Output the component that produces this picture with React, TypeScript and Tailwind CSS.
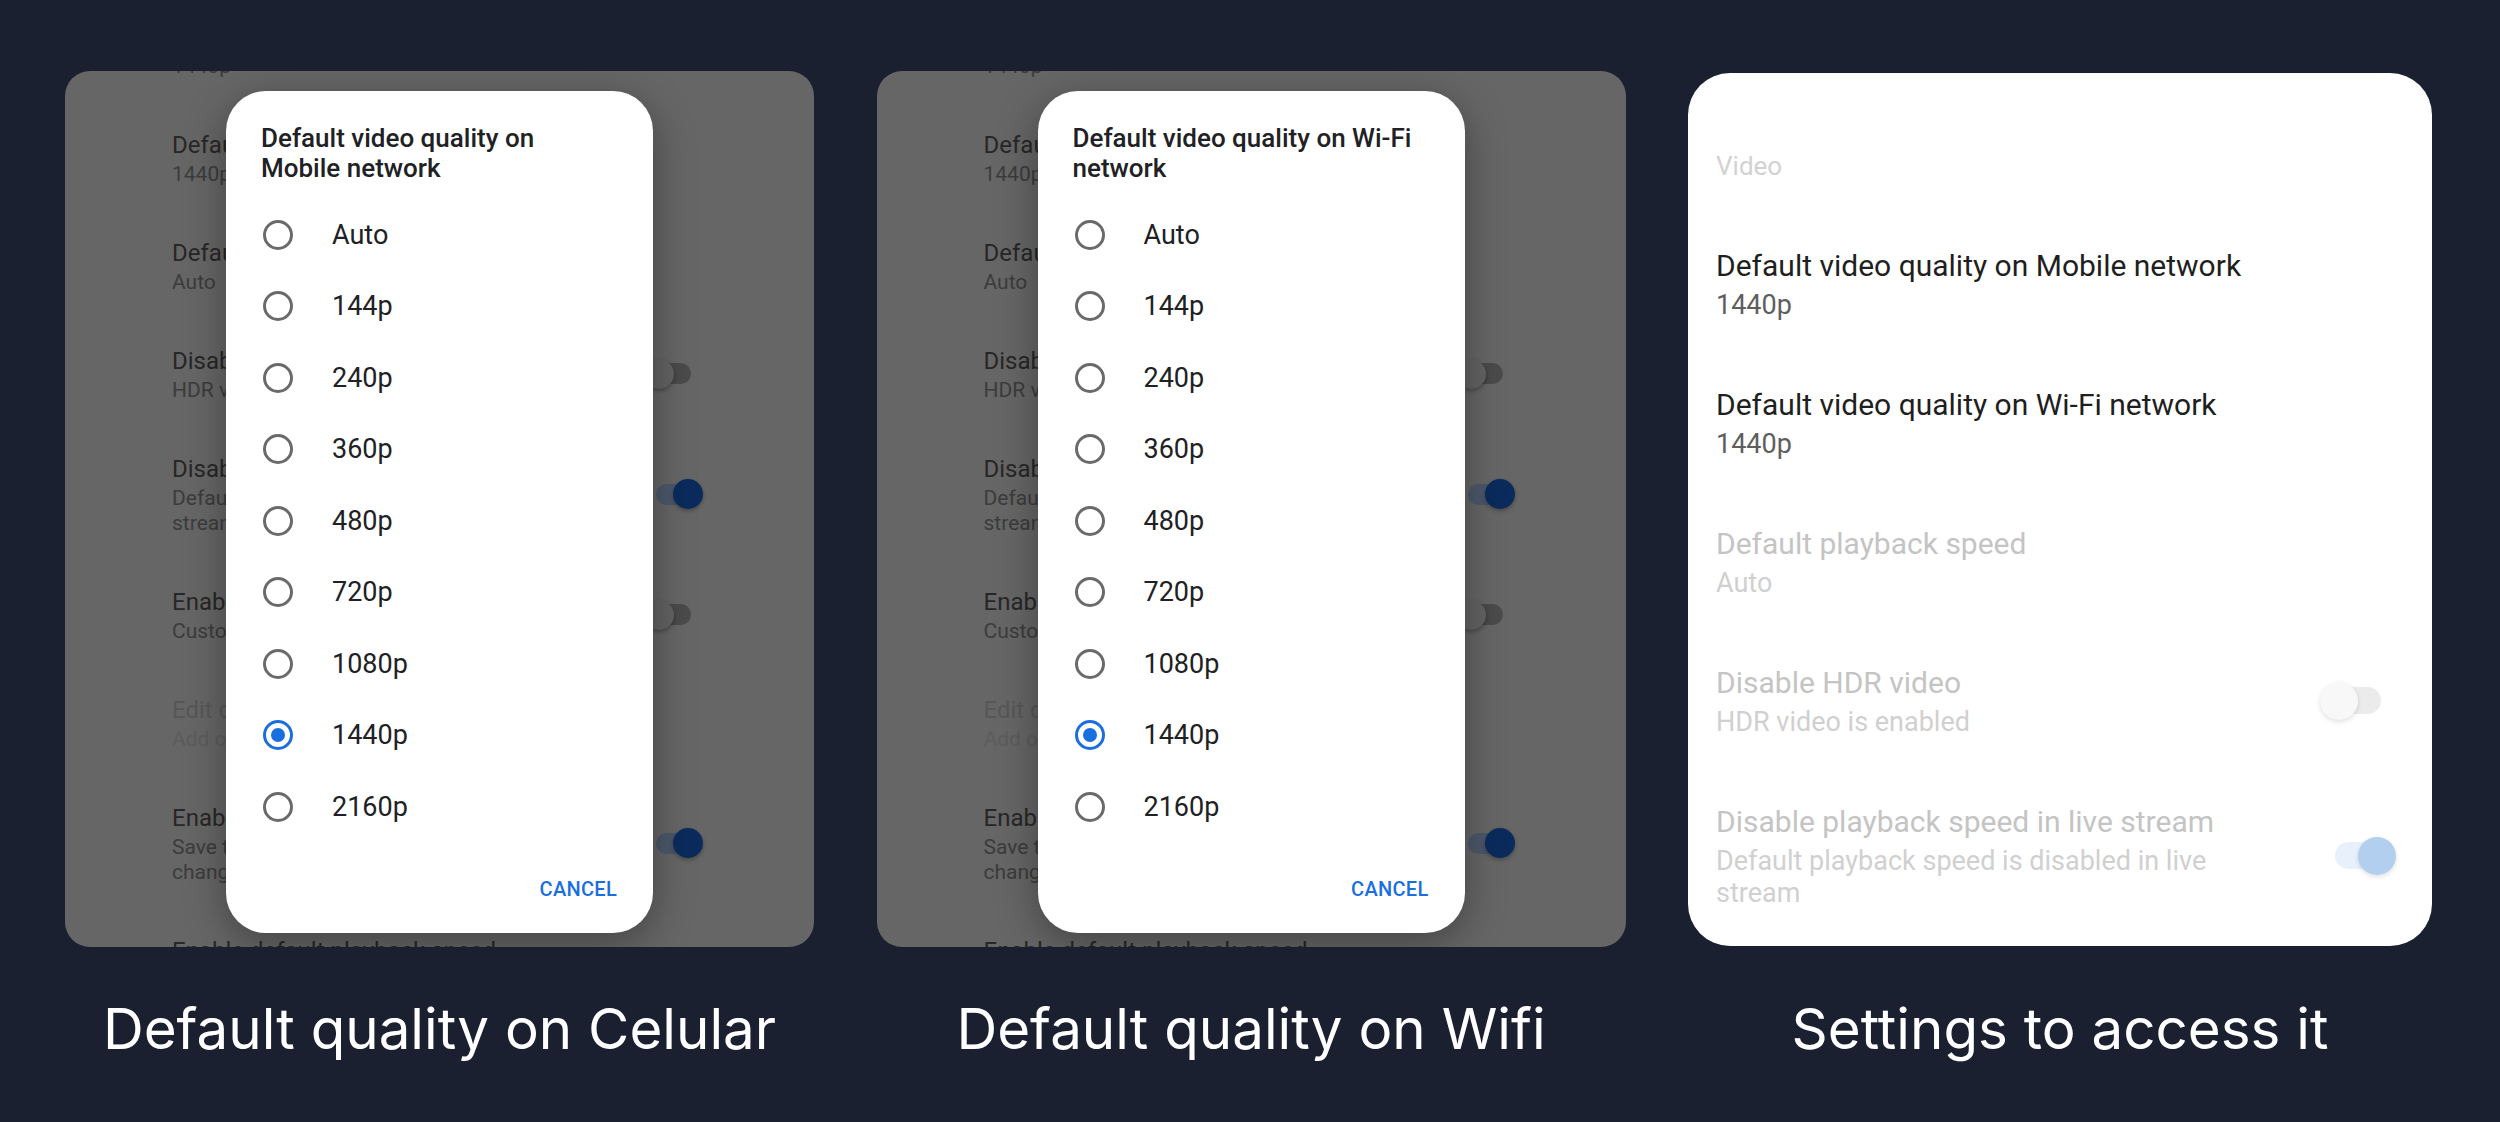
import React from "react";

type Row = {
  title: string;
  sub: string[];
  toggle?: "on" | "off";
  disabled?: boolean;
};

const qualities = ["Auto", "144p", "240p", "360p", "480p", "720p", "1080p", "1440p", "2160p"];

// settings list that sits dimmed behind the dialogs
const dimRows: Row[] = [
  { title: "Default video quality on Mobile network", sub: ["1440p"] },
  { title: "Default video quality on Wi-Fi network", sub: ["1440p"] },
  { title: "Default playback speed", sub: ["Auto"] },
  { title: "Disable HDR video", sub: ["HDR video is enabled"], toggle: "off" },
  {
    title: "Disable playback speed in live stream",
    sub: ["Default playback speed is disabled in live", "stream"],
    toggle: "on",
  },
  { title: "Enable custom playback speed", sub: ["Custom playback speed is disabled"], toggle: "off" },
  { title: "Edit custom playback speeds", sub: ["Add or change the available speeds"], disabled: true },
  {
    title: "Enable save playback speed",
    sub: ["Save the playback speed whenever it is", "changed"],
    toggle: "on",
  },
  { title: "Enable default playback speed", sub: ["Default playback speed is enabled"], toggle: "off" },
];

const liveRows: Row[] = [
  { title: "Default video quality on Mobile network", sub: ["1440p"] },
  { title: "Default video quality on Wi-Fi network", sub: ["1440p"] },
  { title: "Default playback speed", sub: ["Auto"], disabled: true },
  { title: "Disable HDR video", sub: ["HDR video is enabled"], toggle: "off", disabled: true },
  {
    title: "Disable playback speed in live stream",
    sub: ["Default playback speed is disabled in live", "stream"],
    toggle: "on",
    disabled: true,
  },
];

function DimToggle({ on }: { on: boolean }) {
  return (
    <div className="relative w-[59px] h-[30px] shrink-0">
      <div
        className={`absolute left-[12px] top-[4.5px] w-[35px] h-[21px] rounded-full ${
          on ? "bg-[#4c586b]" : "bg-[#4b4b4b]"
        }`}
      />
      <div
        className={`absolute top-0 w-[30px] h-[30px] rounded-full shadow-[0_2px_4px_rgba(0,0,0,0.3)] ${
          on ? "right-0 bg-[#0a2b5c]" : "left-0 bg-[#636363]"
        }`}
      />
    </div>
  );
}

function LightToggle({ on }: { on: boolean }) {
  return (
    <div className="relative w-[76px] h-[38px] shrink-0">
      <div
        className={`absolute left-[15px] top-[5.5px] w-[46px] h-[27px] rounded-full ${
          on ? "bg-[#e8f0fb]" : "bg-[#ebebeb]"
        }`}
      />
      <div
        className={`absolute top-0 w-[38px] h-[38px] rounded-full shadow-[0_2px_5px_rgba(0,0,0,0.12)] ${
          on ? "right-0 bg-[#b3cff0]" : "left-0 bg-[#f8f8f8]"
        }`}
      />
    </div>
  );
}

function Radio({ selected }: { selected: boolean }) {
  return (
    <span
      className={`w-[30px] h-[30px] rounded-full border-[3px] flex items-center justify-center shrink-0 ${
        selected ? "border-[#1a6fe0]" : "border-[#6a6a6a]"
      }`}
    >
      {selected && <span className="w-[14px] h-[14px] rounded-full bg-[#1a6fe0]" />}
    </span>
  );
}

function QualityDialog({ title }: { title: string[] }) {
  return (
    <div className="absolute left-[161px] top-[20px] w-[427px] h-[842px] bg-white rounded-[40px] shadow-[0_10px_40px_rgba(0,0,0,0.35)] flex flex-col">
      <div className="pt-[32px] pl-[35px] text-[26px] leading-[30px] font-medium text-[#202124]">
        {title[0]}
        <br />
        {title[1]}
      </div>
      <div className="mt-[16px] flex flex-col">
        {qualities.map((q) => (
          <div key={q} className="h-[71.5px] flex items-center pl-[37px]">
            <Radio selected={q === "1440p"} />
            <span className="ml-[39px] text-[27px] text-[#202124]">{q}</span>
          </div>
        ))}
      </div>
      <div className="mt-auto mb-[29px] pr-[36px] flex justify-end">
        <span className="text-[20px] font-medium text-[#1a6fe0] tracking-[0.3px]">CANCEL</span>
      </div>
    </div>
  );
}

function DimPanel({ title }: { title: string[] }) {
  return (
    <div className="relative w-[749px] h-[876px] rounded-[25px] bg-[#666666] overflow-hidden">
      <div className="mt-[-75px] flex flex-col">
        {dimRows.map((r) => (
          <div key={r.title} className="flex items-center pl-[107px] pr-[111px] pt-[24px] pb-[25px]">
            <div className="flex-1 min-w-0 overflow-hidden whitespace-nowrap">
              <div
                className={`text-[24px] leading-[34px] ${r.disabled ? "text-[#575757]" : "text-[#272727]"}`}
              >
                {r.title}
              </div>
              {r.sub.map((s) => (
                <div
                  key={s}
                  className={`text-[21px] leading-[25px] ${r.disabled ? "text-[#5c5c5c]" : "text-[#3c3c3c]"}`}
                >
                  {s}
                </div>
              ))}
            </div>
            {r.toggle && <DimToggle on={r.toggle === "on"} />}
          </div>
        ))}
      </div>
      <QualityDialog title={title} />
    </div>
  );
}

function SettingsPanel() {
  return (
    <div className="mt-[2px] w-[744px] h-[873px] rounded-[42px] bg-white overflow-hidden flex flex-col">
      <div className="pt-[76px] pl-[28px] text-[26px] leading-[34px] text-[#d2d2d2] mb-[31px]">Video</div>
      {liveRows.map((r) => (
        <div key={r.title} className="flex items-center pl-[28px] pr-[36px] py-[32px]">
          <div className="flex-1 min-w-0">
            <div
              className={`text-[30px] leading-[40px] whitespace-nowrap ${
                r.disabled ? "text-[#c4c4c4]" : "text-[#1f1f1f]"
              }`}
            >
              {r.title}
            </div>
            <div
              className={`mt-[3px] text-[27px] leading-[32px] ${r.disabled ? "text-[#d0d0d0]" : "text-[#5e5e5e]"}`}
            >
              {r.sub.map((s, i) => (
                <div key={i}>{s}</div>
              ))}
            </div>
          </div>
          {r.toggle && <LightToggle on={r.toggle === "on"} />}
        </div>
      ))}
    </div>
  );
}

export default function App() {
  return (
    <div
      className="w-[2500px] h-[1122px] bg-[#1b2030] pt-[71px] pl-[65px] overflow-hidden"
      style={{ fontFamily: "Roboto, 'Noto Sans', sans-serif" }}
    >
      <div className="grid grid-cols-[749px_749px_744px] gap-x-[62.5px] items-start">
        <DimPanel title={["Default video quality on", "Mobile network"]} />
        <DimPanel title={["Default video quality on Wi-Fi", "network"]} />
        <SettingsPanel />
      </div>
      {/* captions */}
      <div className="mt-[54px] grid grid-cols-[749px_749px_744px] gap-x-[62.5px] font-['Inter',sans-serif] text-white text-[56.5px] leading-none text-center">
        <div>Default quality on Celular</div>
        <div>Default quality on Wifi</div>
        <div>Settings to access it</div>
      </div>
    </div>
  );
}
